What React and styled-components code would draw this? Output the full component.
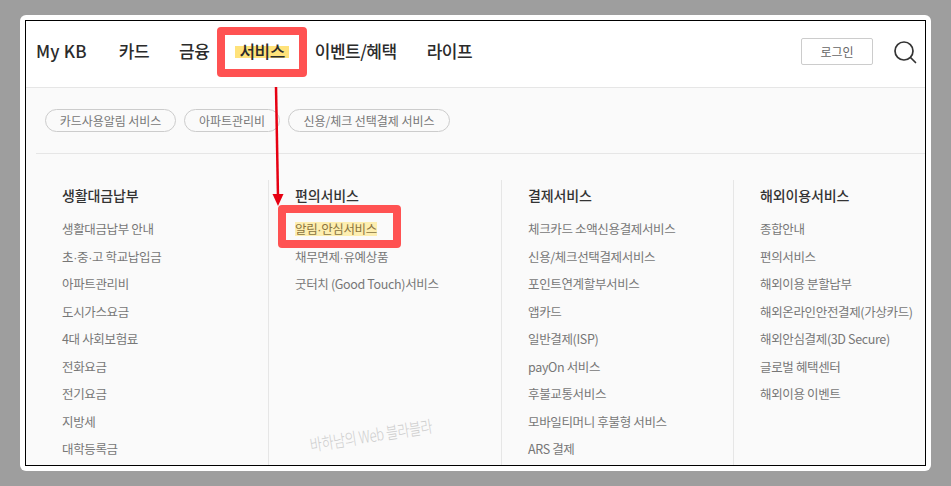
import React from "react";
import styled, { createGlobalStyle } from "styled-components";

const Global = createGlobalStyle`
	html, body {
		margin: 0;
		height: 100%;
		background: #9e9e9e;
		overflow: hidden;
	}
	body {
		font-family: "Noto Sans CJK KR", "Noto Sans", sans-serif;
	}
`;

const Page = styled.div`
	padding: 15px 20px;
`;

const Frame = styled.div`
	width: 911px;
	height: 456px;
	box-sizing: border-box;
	padding: 5px;
	background: #fff;
	border-radius: 6px;
`;

const Screen = styled.div`
	position: relative;
	height: 100%;
	box-sizing: border-box;
	border: 1px solid #000;
	overflow: hidden;
	background: #fafafa;
`;

const Header = styled.header`
	display: flex;
	align-items: center;
	height: 67px;
	box-sizing: border-box;
	padding: 0 0 5px 10px;
	background: #fff;
	border-bottom: 1px solid #e6e6e6;
`;

const Nav = styled.nav`
	display: flex;
	align-items: center;
	gap: 30px;
	flex: 1;
	margin-bottom: 2px;
`;

const NavItem = styled.a`
	position: relative;
	font-size: 17px;
	font-weight: 500;
	letter-spacing: -0.5px;
	color: #2b2b2b;
	line-height: 24px;
	${(p) => p.$latin && "letter-spacing: 0.2px; margin-right: 2px;"}
`;

const NavMark = styled.span`
	display: inline-block;
	margin: 0 -4px;
	padding: 0 4px;
	background: linear-gradient(transparent 7px, #ffe27a 7px, #ffe27a 19px, transparent 19px);
`;

const LoginButton = styled.button`
	width: 72px;
	height: 27px;
	margin-right: 20px;
	padding: 0;
	border: 1px solid #ccc;
	border-radius: 2px;
	background: #fff;
	font-family: inherit;
	font-size: 12px;
	color: #666;
`;

const SearchIcon = styled.svg`
	width: 24px;
	height: 24px;
	margin-right: 8px;
	flex: none;
`;

const PillBar = styled.div`
	display: flex;
	align-items: center;
	gap: 8px;
	height: 66px;
	box-sizing: border-box;
	margin-left: 10px;
	padding: 0 9px;
	border-bottom: 1px solid #e6e6e6;
`;

const Pill = styled.a`
	display: flex;
	align-items: center;
	justify-content: center;
	width: ${(p) => p.$w}px;
	height: 23px;
	box-sizing: border-box;
	border: 1px solid #ccc;
	border-radius: 12px;
	font-size: 12px;
	letter-spacing: -0.05px;
	color: #777;
`;

const Columns = styled.div`
	display: grid;
	grid-template-columns: 232px 233px 232px 1fr;
	margin: 26px 0 0 10px;
`;

const Column = styled.section`
	height: 300px;
	box-sizing: border-box;
	padding-left: 26px;
	border-left: ${(p) => (p.$first ? "none" : "1px solid #e6e6e6")};
`;

const ColumnTitle = styled.h3`
	margin: 4px 0 9px;
	font-size: 14px;
	font-weight: 500;
	line-height: 22px;
	letter-spacing: -0.15px;
	color: #333;
`;

const Link = styled.div`
	height: 27.5px;
	font-size: 12.5px;
	line-height: 27.5px;
	letter-spacing: -0.35px;
	color: #777;
	white-space: nowrap;
`;

const Marked = styled.span`
	display: inline-block;
	line-height: 14px;
	background: #fdeeb0;
	color: #8a7440;
`;

// the middle dot is much narrower in the original font
const Dot = styled.span`
	font-family: "Liberation Sans", sans-serif;
	line-height: 0;
`;

const RedBox = styled.div`
	position: absolute;
	left: ${(p) => p.$x}px;
	top: ${(p) => p.$y}px;
	width: ${(p) => p.$w}px;
	height: ${(p) => p.$h}px;
	box-sizing: border-box;
	border: 8px solid #ff5252;
	border-radius: 4px;
`;

const Arrow = styled.svg`
	position: absolute;
	left: 244px;
	top: 66px;
	width: 16px;
	height: 120px;
`;

const Watermark = styled.div`
	position: absolute;
	left: 284px;
	top: 414px;
	font-size: 13px;
	font-weight: 300;
	letter-spacing: -0.3px;
	color: #cdcdcd;
	white-space: nowrap;
	transform: rotate(-9deg) scaleY(1.3);
	transform-origin: left center;
`;

const columns = [
	{
		title: "생활대금납부",
		links: ["생활대금납부 안내", "초·중·고 학교납입금", "아파트관리비", "도시가스요금", "4대 사회보험료", "전화요금", "전기요금", "지방세", "대학등록금"],
	},
	{
		title: "편의서비스",
		links: ["알림·안심서비스", "채무면제·유예상품", "굿터치 (Good Touch)서비스"],
	},
	{
		title: "결제서비스",
		links: ["체크카드 소액신용결제서비스", "신용/체크선택결제서비스", "포인트연계할부서비스", "앱카드", "일반결제(ISP)", "payOn 서비스", "후불교통서비스", "모바일티머니 후불형 서비스", "ARS 결제"],
	},
	{
		title: "해외이용서비스",
		links: ["종합안내", "편의서비스", "해외이용 분할납부", "해외온라인안전결제(가상카드)", "해외안심결제(3D Secure)", "글로벌 혜택센터", "해외이용 이벤트"],
	},
];

const withDots = (text) =>
	text.split("·").map((part, i) => (
		<React.Fragment key={i}>
			{i > 0 && <Dot>·</Dot>}
			{part}
		</React.Fragment>
	));

export default function App() {
	return (
		<Page>
			<Global />
			<Frame>
				<Screen>
					<Header>
						<Nav>
							<NavItem $latin>My KB</NavItem>
							<NavItem>카드</NavItem>
							<NavItem>금융</NavItem>
							<NavItem>
								<NavMark>서비스</NavMark>
							</NavItem>
							<NavItem>이벤트/혜택</NavItem>
							<NavItem>라이프</NavItem>
						</Nav>
						<LoginButton>로그인</LoginButton>
						<SearchIcon viewBox="0 0 24 24" fill="none" stroke="#333" strokeWidth="1.7" strokeLinecap="round">
							<circle cx="11" cy="11" r="9" />
							<path d="M17.5 17.5 L22.5 22.5" />
						</SearchIcon>
					</Header>
					<PillBar>
						<Pill $w={131}>카드사용알림 서비스</Pill>
						<Pill $w={96}>아파트관리비</Pill>
						<Pill $w={162}>신용/체크 선택결제 서비스</Pill>
					</PillBar>
					<Columns>
						{columns.map((col, i) => (
							<Column key={col.title} $first={i === 0}>
								<ColumnTitle>{col.title}</ColumnTitle>
								{col.links.map((link) => (
									<Link key={link}>
										{link === "알림·안심서비스" ? <Marked>{withDots(link)}</Marked> : withDots(link)}
									</Link>
								))}
							</Column>
						))}
					</Columns>
					<RedBox $x={191} $y={6} $w={90} $h={50} />
					<RedBox $x={252} $y={184} $w={123} $h={43} />
					<Arrow viewBox="0 0 16 120">
						<path d="M6 0 L8 110" stroke="#e60012" strokeWidth="2.5" fill="none" />
						<path d="M2.5 107 L13.5 107 L8 119 Z" fill="#e60012" />
					</Arrow>
					<Watermark>바하남의 Web 블라블라</Watermark>
				</Screen>
			</Frame>
		</Page>
	);
}
